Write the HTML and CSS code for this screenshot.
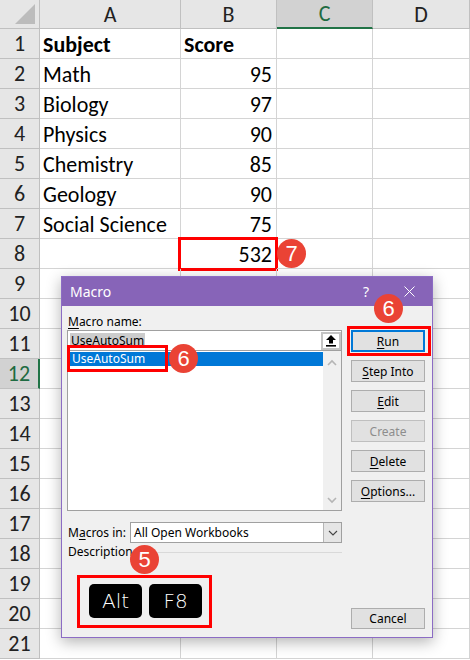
FILE: index.html
```html
<!DOCTYPE html>
<html>
<head>
<meta charset="utf-8">
<link rel="stylesheet" href="styles.css">
</head>
<body>
<div class="sheet">
  <div class="c h corner"><span class="tri"></span></div>
  <div class="c h">A</div><div class="c h">B</div><div class="c h selcol">C</div><div class="c h">D</div>

  <div class="c h">1</div><div class="c b">Subject</div><div class="c b">Score</div><div class="c"></div><div class="c"></div>
  <div class="c h">2</div><div class="c">Math</div><div class="c num">95</div><div class="c"></div><div class="c"></div>
  <div class="c h">3</div><div class="c">Biology</div><div class="c num">97</div><div class="c"></div><div class="c"></div>
  <div class="c h">4</div><div class="c">Physics</div><div class="c num">90</div><div class="c"></div><div class="c"></div>
  <div class="c h">5</div><div class="c">Chemistry</div><div class="c num">85</div><div class="c"></div><div class="c"></div>
  <div class="c h">6</div><div class="c">Geology</div><div class="c num">90</div><div class="c"></div><div class="c"></div>
  <div class="c h">7</div><div class="c">Social Science</div><div class="c num">75</div><div class="c"></div><div class="c"></div>
  <div class="c h">8</div><div class="c"></div><div class="c num total">532<span class="badge badge7">7</span></div><div class="c"></div><div class="c"></div>
  <div class="c h">9</div><div class="c"></div><div class="c"></div><div class="c"></div><div class="c"></div>
  <div class="c h">10</div><div class="c"></div><div class="c"></div><div class="c"></div><div class="c"></div>
  <div class="c h">11</div><div class="c"></div><div class="c"></div><div class="c"></div><div class="c"></div>
  <div class="c h selrow">12</div><div class="c"></div><div class="c"></div><div class="c"></div><div class="c"></div>
  <div class="c h">13</div><div class="c"></div><div class="c"></div><div class="c"></div><div class="c"></div>
  <div class="c h">14</div><div class="c"></div><div class="c"></div><div class="c"></div><div class="c"></div>
  <div class="c h">15</div><div class="c"></div><div class="c"></div><div class="c"></div><div class="c"></div>
  <div class="c h">16</div><div class="c"></div><div class="c"></div><div class="c"></div><div class="c"></div>
  <div class="c h">17</div><div class="c"></div><div class="c"></div><div class="c"></div><div class="c"></div>
  <div class="c h">18</div><div class="c"></div><div class="c"></div><div class="c"></div><div class="c"></div>
  <div class="c h">19</div><div class="c"></div><div class="c"></div><div class="c"></div><div class="c"></div>
  <div class="c h">20</div><div class="c"></div><div class="c"></div><div class="c"></div><div class="c"></div>
  <div class="c h">21</div><div class="c"></div><div class="c"></div><div class="c"></div><div class="c"></div>
</div>

<div class="dialog">
  <div class="titlebar">
    <span class="title">Macro</span>
    <span class="help">?</span>
    <svg class="close" width="11" height="11" viewBox="0 0 11 11"><path d="M0.5 0.5 L10.5 10.5 M10.5 0.5 L0.5 10.5" stroke="#fff" stroke-width="1" fill="none"/></svg>
  </div>
  <div class="dbody">
    <div class="left">
      <div class="label"><u>M</u>acro name:</div>
      <div class="namebox">
        <span class="seltext">UseAutoSum</span>
        <span class="upbtn"><svg width="12" height="13" viewBox="0 0 12 13"><path d="M6 1 L11 6 H8 V9.5 H4 V6 H1 Z" fill="#000"/><rect x="1" y="11" width="10" height="1.6" fill="#000"/></svg></span>
      </div>
      <div class="list">
        <div class="items"><div class="item active">UseAutoSum</div></div>
        <div class="scroll">
          <svg width="12" height="8" viewBox="0 0 12 8"><path d="M2 6 L6 2 L10 6" stroke="#b5b5b5" stroke-width="1.6" fill="none"/></svg>
          <svg width="12" height="8" viewBox="0 0 12 8"><path d="M2 2 L6 6 L10 2" stroke="#b5b5b5" stroke-width="1.6" fill="none"/></svg>
        </div>
      </div>
      <div class="macrosin">
        <span class="mlabel">M<u>a</u>cros in:</span>
        <div class="select">
          <span class="seltxt">All Open Workbooks</span>
          <span class="drop"><svg width="10" height="6" viewBox="0 0 10 6"><path d="M1 1 L5 5 L9 1" stroke="#444" stroke-width="1.1" fill="none"/></svg></span>
        </div>
      </div>
      <div class="desc"><span>Description</span><span class="rule"></span></div>
      <div class="keys"><span class="key">Alt</span><span class="key">F8</span></div>
    </div>
    <div class="right">
      <div class="btn run"><u>R</u>un</div>
      <div class="btn"><u>S</u>tep Into</div>
      <div class="btn"><u>E</u>dit</div>
      <div class="btn disabled">Create</div>
      <div class="btn"><u>D</u>elete</div>
      <div class="btn"><u>O</u>ptions...</div>
      <div class="btn cancel">Cancel</div>
    </div>
  </div>
  <span class="redbox listbox"></span>
  <span class="badge badge6a">6</span>
  <span class="badge badge6b">6</span>
  <span class="badge badge5">5</span>
</div>
</body>
</html>
```

FILE: styles.css
```css
html, body {
  margin: 0;
  padding: 0;
}
body {
  width: 470px;
  height: 660px;
  overflow: hidden;
  position: relative;
  background: #fff;
  font-family: Carlito, Lato, "Liberation Sans", sans-serif;
}

.sheet {
  display: grid;
  grid-template-columns: 40px 141px 96px 96px 97px;
  grid-template-rows: 29px repeat(21, 30px);
}
.c {
  box-sizing: border-box;
  border-right: 1px solid #d4d4d4;
  border-bottom: 1px solid #d4d4d4;
  display: flex;
  align-items: center;
  padding: 1px 4px 0 3px;
  font-size: 22px;
  color: #000;
  white-space: nowrap;
  position: relative;
}
.h {
  background: #e6e6e6;
  border-color: #c0c0c0;
  justify-content: center;
  padding: 0;
  color: #222;
  font-size: 22px;
}
.corner .tri {
  position: absolute;
  right: 4px;
  bottom: 4px;
  width: 0;
  height: 0;
  border-left: 20px solid transparent;
  border-bottom: 20px solid #bcbcbc;
}
.selcol {
  background: #d2d2d2;
  color: #1e6b41;
  border-bottom: 2px solid #217346;
}
.selrow {
  background: #d2d2d2;
  color: #1e6b41;
  border-right: 2px solid #217346;
}
.b { font-weight: bold; }
.num { justify-content: flex-end; }
.total::after {
  content: "";
  position: absolute;
  left: -3px;
  right: -2px;
  top: -2px;
  bottom: -3px;
  border: 3px solid #ff0000;
}

.badge {
  position: absolute;
  width: 29px;
  height: 29px;
  border-radius: 50%;
  background: #ea4335;
  color: #fff;
  font-family: "Liberation Sans", Arial, sans-serif;
  font-size: 22px;
  line-height: 29px;
  text-align: center;
  z-index: 3;
}
.badge7 { left: 96px; top: 0px; }
.badge6a { left: 107px; top: 67px; }
.badge6b { left: 312px; top: 17px; }
.badge5 { left: 68px; top: 268px; }

.dialog {
  position: absolute;
  left: 61px;
  top: 276px;
  width: 372px;
  height: 362px;
  box-sizing: border-box;
  border: 1px solid #8c6cc4;
  background: #f0f0f0;
  box-shadow: 0 4px 14px rgba(0, 0, 0, 0.3);
  font-family: "Noto Sans", "Open Sans", sans-serif;
  font-size: 12px;
  color: #000;
  display: flex;
  flex-direction: column;
}
.titlebar {
  height: 29px;
  background: #8764b8;
  color: #fff;
  display: flex;
  align-items: center;
  padding-left: 8px;
  flex-shrink: 0;
}
.title { font-size: 14px; flex: 1; }
.help { font-size: 14px; margin-right: 35px; }
.close { margin-right: 17px; }

.dbody {
  flex: 1;
  display: flex;
  padding: 0 6px 8px 5px;
}
.left {
  width: 275px;
  display: flex;
  flex-direction: column;
}
.label {
  margin-top: 8px;
  height: 16px;
  line-height: 16px;
  padding-left: 1px;
}
u { text-decoration: underline; text-underline-offset: 2px; }

.namebox {
  box-sizing: border-box;
  height: 21px;
  border: 1px solid #a0a0a0;
  background: #fff;
  display: flex;
  align-items: center;
  padding-left: 2px;
}
.seltext {
  background: #cccccc;
  line-height: 15px;
  padding: 0 1px;
  flex: none;
}
.upbtn {
  margin-left: auto;
  margin-right: 0px;
  box-sizing: border-box;
  width: 20px;
  height: 18px;
  border: 2px solid #c4c4c4;
  background: #fff;
  display: flex;
  align-items: center;
  justify-content: center;
}

.list {
  box-sizing: border-box;
  height: 161px;
  margin-top: -1px;
  border: 1px solid #a0a0a0;
  background: #fff;
  display: flex;
}
.items {
  flex: 1;
  padding: 1px 0 0 1px;
}
.item {
  height: 14px;
  line-height: 14px;
  padding-left: 3px;
}
.item.active {
  background: #0078d7;
  color: #fff;
}
.scroll {
  width: 18px;
  background: #f0f0f0;
  display: flex;
  flex-direction: column;
  justify-content: space-between;
  align-items: center;
  padding: 8px 0 6px;
  box-sizing: border-box;
}

.macrosin {
  margin-top: 11px;
  height: 21px;
  display: flex;
  align-items: center;
}
.mlabel {
  width: 63px;
  padding-left: 1px;
  box-sizing: border-box;
}
.select {
  flex: 1;
  box-sizing: border-box;
  height: 21px;
  border: 1px solid #a0a0a0;
  background: #fff;
  display: flex;
  align-items: center;
  padding-left: 3px;
}
.seltxt { flex: 1; }
.drop {
  box-sizing: border-box;
  width: 18px;
  height: 19px;
  background: #e5e5e5;
  border-left: 1px solid #b5b5b5;
  display: flex;
  align-items: center;
  justify-content: center;
}

.desc {
  height: 16px;
  line-height: 16px;
  display: flex;
  align-items: center;
  padding-left: 1px;
  margin-top: 1px;
}
.rule {
  flex: 1;
  height: 0;
  border-top: 1px solid #d9d9d9;
  margin-left: 4px;
}

.keys {
  margin-top: 15px;
  margin-left: 10px;
  align-self: flex-start;
  border: 3px solid #ff0000;
  padding: 6px 7px 7px 9px;
  display: flex;
  gap: 7px;
}
.key {
  width: 53px;
  height: 34px;
  background: #000;
  border-radius: 5px;
  color: #fff;
  font-family: "DejaVu Sans", sans-serif;
  font-weight: 200;
  font-size: 20px;
  display: flex;
  align-items: center;
  justify-content: center;
}

.right {
  width: 74px;
  margin-left: 9px;
  padding-top: 24px;
  display: flex;
  flex-direction: column;
  gap: 8px;
}
.btn {
  box-sizing: border-box;
  height: 22px;
  background: #e1e1e1;
  border: 1px solid #adadad;
  display: flex;
  align-items: center;
  justify-content: center;
  position: relative;
}
.btn.run {
  border: 2px solid #0078d7;
}
.btn.run::after {
  content: "";
  position: absolute;
  left: -6px;
  right: -8px;
  top: -6px;
  bottom: -6px;
  border: 3px solid #ff0000;
}
.btn.disabled {
  color: #8d8d8d;
  border-color: #bfbfbf;
}
.btn.cancel {
  margin-top: auto;
  height: 21px;
}

.redbox {
  position: absolute;
  box-sizing: border-box;
  border: 3px solid #ff0000;
}
.listbox {
  left: 5px;
  top: 68px;
  width: 101px;
  height: 27px;
}
```
